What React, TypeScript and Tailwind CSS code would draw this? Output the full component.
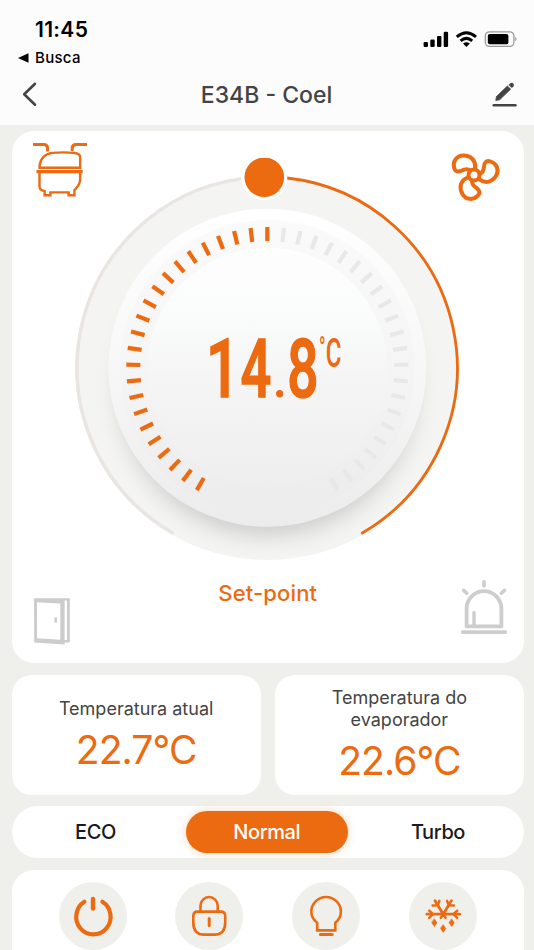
import React from "react";

const ORANGE = "#ec6a10";
const STEP = 150 / 22;

function StatusBar() {
  return (
    <div className="flex h-[68px] justify-between pt-[17px] pr-[16px] pl-[18px] text-black">
      <div className="flex flex-col">
        <span className="pl-[17px] text-[21px] leading-[25px] font-semibold tracking-[0.3px]">11:45</span>
        <span className="mt-[7px] flex h-[18px] items-center gap-[6px] text-[15px] leading-[18px] font-medium tracking-[0.3px]">
          <svg width="11" height="10" viewBox="0 0 11 10">
            <path d="M0 5 10.5 0.3V9.7Z" fill="#000" />
          </svg>
          Busca
        </span>
      </div>
      <svg className="mt-[13px]" width="95" height="18" viewBox="423 30 95 18">
        <rect x="423.6" y="42" width="4.4" height="5" rx="1.2" />
        <rect x="430.3" y="39.6" width="4.4" height="7.4" rx="1.2" />
        <rect x="437" y="36" width="4.4" height="11" rx="1.2" />
        <rect x="443.7" y="31.8" width="4.4" height="15.2" rx="1.2" />
        <g fill="none" stroke="#000" strokeWidth="3">
          <path d="M456.8 36.8Q466.4 28.6 476 36.8" />
          <path d="M460.6 40.8Q466.4 35.9 472.2 40.8" />
        </g>
        <path d="M463 43.6Q466.4 41 469.8 43.6L466.4 47Z" />
        <rect x="485.3" y="31.8" width="28.6" height="14.6" rx="4.2" fill="none" stroke="#999" strokeWidth="1.3" />
        <rect x="487.8" y="34" width="20.6" height="10.2" rx="2" />
        <path d="M515.4 36.8Q517.6 39 515.4 41.4Z" fill="#888" />
      </svg>
    </div>
  );
}

function TitleBar() {
  return (
    <div className="flex h-[57px] items-start justify-between pr-[17px] pl-[21px]">
      <svg className="mt-[13px]" width="18" height="26" viewBox="21 81 18 26" fill="none" stroke="#444" strokeWidth="2.6" strokeLinecap="round" strokeLinejoin="round">
        <path d="M35 83.8 24.2 94.3 35 104.8" />
      </svg>
      <h1 className="mt-[13px] ml-[3px] text-[23px] leading-[28px] font-medium text-[#444]">E34B - Coel</h1>
      <svg className="mt-[13px]" width="26" height="26" viewBox="491 81 26 26">
        <path d="M493.8 105.2H515.4" stroke="#444" strokeWidth="2.6" strokeLinecap="round" />
        <path d="M495.8 100.4 496.4 96.6 507.4 86 510.6 89.2 499.6 99.8Z" fill="#444" stroke="#444" strokeWidth="0.8" strokeLinejoin="round" />
        <path d="M508.6 84.9 510.4 83.3Q511.8 82.2 513.2 83.6 514.6 85.1 513.5 86.4L511.8 88Z" fill="#444" />
      </svg>
    </div>
  );
}

function CompressorIcon() {
  return (
    <svg width="56" height="56" viewBox="32 142 56 56" fill="none" stroke={ORANGE} strokeWidth="2.4">
      <path d="M33 144.4H43.6Q47.6 144.4 47.6 148.4V151.4" strokeWidth="3" />
      <path d="M87 144.4H76Q72.2 144.4 72.2 148.4V151" strokeWidth="3" />
      <path d="M39.6 167.8V165.6C40.2 159 45 153.6 52 152.9Q65 151.8 75 153Q80.2 153.6 80.2 157.6V167.8Z" />
      <path d="M36.5 171.7H82.7" strokeWidth="3.2" />
      <path d="M39.5 172V186.5Q39.7 190.4 44.6 191.2V195.2H50.4V192.4H68.6V195.2H74.4V190.2Q76 188.6 76.6 187.6Q80.2 184 80.2 178V172" />
    </svg>
  );
}

const blade =
  "M0.9 -6.2C2.4 -14.6 -3.4 -19.5 -10.6 -19.5C-17.6 -19.5 -21.6 -13.4 -19.8 -7C-18.7 -2.8 -15.4 -3 -12.4 -4.4C-9.4 -5.9 -6 -6.4 -3.6 -4.2";

function FanIcon() {
  return (
    <svg width="52" height="52" viewBox="-24 -24 52 52" fill="none" stroke={ORANGE} strokeWidth="4">
      <circle r="5.5" />
      <path d={blade} />
      <path d={blade} transform="rotate(120)" />
      <path d={blade} transform="rotate(240)" />
    </svg>
  );
}

function DoorIcon() {
  return (
    <svg width="38" height="48" viewBox="32 597 38 48">
      <path d="M34 599Q34 598.2 35 598.2L68.8 598.2Q69.8 598.2 69.8 599.2V641.4Q69.8 642.4 68.8 642.4H64.6V644.4L34.2 642.4ZM37 602.3V638.3L60.3 639.8V603.4ZM64.6 600.4V640H67V600.4Z" fill="#ccc" fillRule="evenodd" />
      <rect x="54.4" y="617.4" width="2.6" height="5.2" fill="#ccc" />
    </svg>
  );
}

function SirenIcon() {
  return (
    <svg width="48" height="56" viewBox="460 579 48 56" fill="none" stroke="#cdcdcd" strokeWidth="3.8" strokeLinecap="round" strokeLinejoin="round">
      <path d="M462.7 632.1H505.3" />
      <path d="M466.6 626.4V608.6A17.4 17.4 0 0 1 501.4 608.6V626.4Z" />
      <path d="M474 612.6V625" strokeWidth="3.4" />
      <path d="M484 581.8V586M463.6 590.3 466.8 593.2M504.5 590.3 501.4 593.2" strokeWidth="3.6" />
    </svg>
  );
}

function Dial() {
  const ticks = Array.from({ length: 45 }, (_, i) => i - 22);
  const digits = [
    { ch: "1", x: 206, sx: 0.72, sy: 1 },
    { ch: "4", x: 240.6, sx: 0.66, sy: 1 },
    { ch: ".", x: 273.6, sx: 0.56, sy: 0.62 },
    { ch: "8", x: 287.2, sx: 0.67, sy: 1 },
  ];
  return (
    <svg width="387" height="404" viewBox="74 158 387 404">
      <defs>
        <linearGradient id="face" x1="0" y1="0" x2="0" y2="1">
          <stop offset="0" stopColor="#ffffff" />
          <stop offset="0.45" stopColor="#f8f8f8" />
          <stop offset="1" stopColor="#ececec" />
        </linearGradient>
        <linearGradient id="inner" x1="0" y1="0" x2="0" y2="1">
          <stop offset="0" stopColor="#fefefe" />
          <stop offset="0.3" stopColor="#fafbfb" />
          <stop offset="0.55" stopColor="#f5f5f5" />
          <stop offset="1" stopColor="#eeeeee" />
        </linearGradient>
        <linearGradient id="band" x1="0" y1="0" x2="0" y2="1">
          <stop offset="0" stopColor="#fafafa" />
          <stop offset="0.5" stopColor="#f5f5f5" />
          <stop offset="0.85" stopColor="#eeeeee" />
          <stop offset="1" stopColor="#ececec" />
        </linearGradient>
        <filter id="drop" x="-20%" y="-20%" width="140%" height="150%">
          <feGaussianBlur stdDeviation="10" />
        </filter>
        <clipPath id="disc">
          <circle cx="267.3" cy="368" r="192" />
        </clipPath>
      </defs>
      <circle cx="267.3" cy="368" r="192" fill="#f4f4f3" />
      <g clipPath="url(#disc)">
        <circle cx="267.3" cy="387" r="150" fill="#000" fillOpacity="0.15" filter="url(#drop)" />
      </g>
      <circle cx="267.3" cy="367.7" r="159" fill="url(#face)" />
      <circle cx="267.3" cy="367.7" r="147.5" fill="url(#band)" />
      <circle cx="267.3" cy="367.7" r="120" fill="url(#inner)" />
      <path d="M240.5 178.9A190.6 190.6 0 0 0 172.3 532.6" fill="none" stroke="#e8e5e3" strokeWidth="3.4" strokeLinecap="round" />
      <path d="M287 178A191 191 0 0 1 362.3 533" fill="none" stroke={ORANGE} strokeWidth="2.8" strokeLinecap="round" />
      {ticks.map((i) => (
        <rect
          key={i}
          x="265.2"
          y="227"
          width="4.2"
          height="14"
          fill={i <= 0 ? ORANGE : "#e8e8e8"}
          transform={`rotate(${i * STEP} 267.3 368)`}
        />
      ))}
      <circle cx="264.3" cy="177.2" r="23" fill="#fff" />
      <circle cx="264.3" cy="177.2" r="19.8" fill={ORANGE} />
      <g fill={ORANGE} fontFamily="Roboto, sans-serif">
        {digits.map((d) => (
          <text key={d.x} fontSize="82" fontWeight="500" stroke={ORANGE} strokeWidth="1.6" transform={`translate(${d.x} 397.4) scale(${d.sx} ${d.sy})`}>
            {d.ch}
          </text>
        ))}
        <text fontSize="29" fontWeight="700" transform="translate(319 358.4) scale(0.58 1)">°</text>
        <text fontSize="40" fontWeight="500" transform="translate(325.8 367) scale(0.6 1)">C</text>
      </g>
    </svg>
  );
}

function DialCard() {
  return (
    <section className="flex h-[532px] justify-between rounded-[22px] bg-white">
      <div className="flex w-[60px] shrink-0 flex-col justify-between pt-[11px] pb-[18px] pl-[20.5px]">
        <div className="w-[56px]"><CompressorIcon /></div>
        <DoorIcon />
      </div>
      <div className="-mx-2 flex shrink-0 flex-col items-center pt-[27px]">
        <Dial />
        <p className="mt-[18px] text-[22px] leading-[26px] font-medium tracking-[0.15px] text-[#ec6a10]">Set-point</p>
      </div>
      <div className="flex w-[60px] shrink-0 flex-col items-end justify-between pt-[20px] pb-[28px]">
        <div className="mr-[22px]"><FanIcon /></div>
        <div className="mr-[16px]"><SirenIcon /></div>
      </div>
    </section>
  );
}

function Reading({ label, value }: { label: React.ReactNode; value: string }) {
  return (
    <section className="flex h-[120px] flex-1 flex-col items-center justify-center gap-[6px] rounded-[20px] bg-white pt-[2px] text-center">
      <p className="text-[18px] leading-[22px] text-[#444]">{label}</p>
      <p className="text-[39px] leading-[48px] tracking-[-0.9px] text-[#ec6a10]">{value}</p>
    </section>
  );
}

function Modes() {
  return (
    <div className="mt-[11px] flex h-[52px] items-center justify-between rounded-full bg-white pr-[5px] pl-[3px] text-[20px] font-medium tracking-[-0.4px] text-[#1a1a1a]">
      <button className="h-[42px] w-[162px]">ECO</button>
      <button className="h-[42px] w-[162px] rounded-full bg-[#ec6a10] text-white shadow-[0_0_8px_rgba(236,106,16,0.3)]">Normal</button>
      <button className="h-[42px] w-[162px]">Turbo</button>
    </div>
  );
}

function Round({ children }: { children: React.ReactNode }) {
  return (
    <button className="size-[68px] rounded-full bg-[#eff0eb]">
      <svg width="68" height="68" viewBox="0 0 68 68" fill="none" stroke={ORANGE} strokeWidth="2.6" strokeLinecap="round" strokeLinejoin="round">
        {children}
      </svg>
    </button>
  );
}

function Actions() {
  return (
    <section className="mt-[12px] flex h-[120px] items-start justify-between rounded-[22px] bg-white px-[47px] pt-[12px]">
      <Round>
        <path d="M25.4 19.8A17.2 17.6 0 1 0 43.4 19.8" strokeWidth="4.2" />
        <path d="M34 17V26.6" strokeWidth="4.4" />
      </Round>
      <Round>
        <path d="M22.5 29.6H46Q50.2 29.6 50.2 34V40.5Q50.2 52.6 39.5 52.6H29Q18.3 52.6 18.3 40.5V34Q18.3 29.6 22.5 29.6Z" />
        <path d="M25.5 29V23.8A8.6 8.8 0 0 1 42.7 23.8V29" />
        <path d="M34.2 36.6V43.4" strokeWidth="3" />
      </Round>
      <Round>
        <path d="M25.2 48.4V40.8Q19.3 36.2 19.3 29.8A14.8 14.8 0 0 1 48.9 29.8Q48.9 36.2 43.3 40.8V48.4Z" strokeLinejoin="miter" />
        <path d="M28.4 52.4H40.2" strokeWidth="3" />
      </Round>
      <Round>
        <path d="M17.8 32.2H50.8M34.2 32.2 26 18.6M34.2 32.2 42.4 18.6" strokeWidth="2.8" />
        <path d="M20.2 28.6 24 32.2 20.2 35.8M48.2 28.6 44.4 32.2 48.2 35.8M23.6 23.4 28.6 23.2 30.4 18.8M44.8 23.4 39.8 23.2 38 18.8M31.8 35.8 34.2 32.2 36.6 35.8" strokeWidth="2.5" />
        <path d="M25.4 37 28 40.8 25.4 44.6 22.8 40.8ZM42.7 37 45.3 40.8 42.7 44.6 40.1 40.8ZM34.2 42.8 36.8 46.6 34.2 50.4 31.6 46.6Z" fill={ORANGE} stroke={ORANGE} strokeWidth="0.6" />
      </Round>
    </section>
  );
}

export default function App() {
  return (
    <div className="h-[950px] w-[534px] overflow-hidden bg-[#eff0eb] font-['Inter',sans-serif]">
      <header className="h-[125px] bg-[#fcfcfc]">
        <StatusBar />
        <TitleBar />
      </header>
      <main className="pt-[6px] pr-[10px] pl-[11.5px]">
        <DialCard />
        <div className="mt-[12px] flex gap-[14px]">
          <Reading label="Temperatura atual" value="22.7°C" />
          <Reading label={<>Temperatura do<br />evaporador</>} value="22.6°C" />
        </div>
        <Modes />
        <Actions />
      </main>
    </div>
  );
}
